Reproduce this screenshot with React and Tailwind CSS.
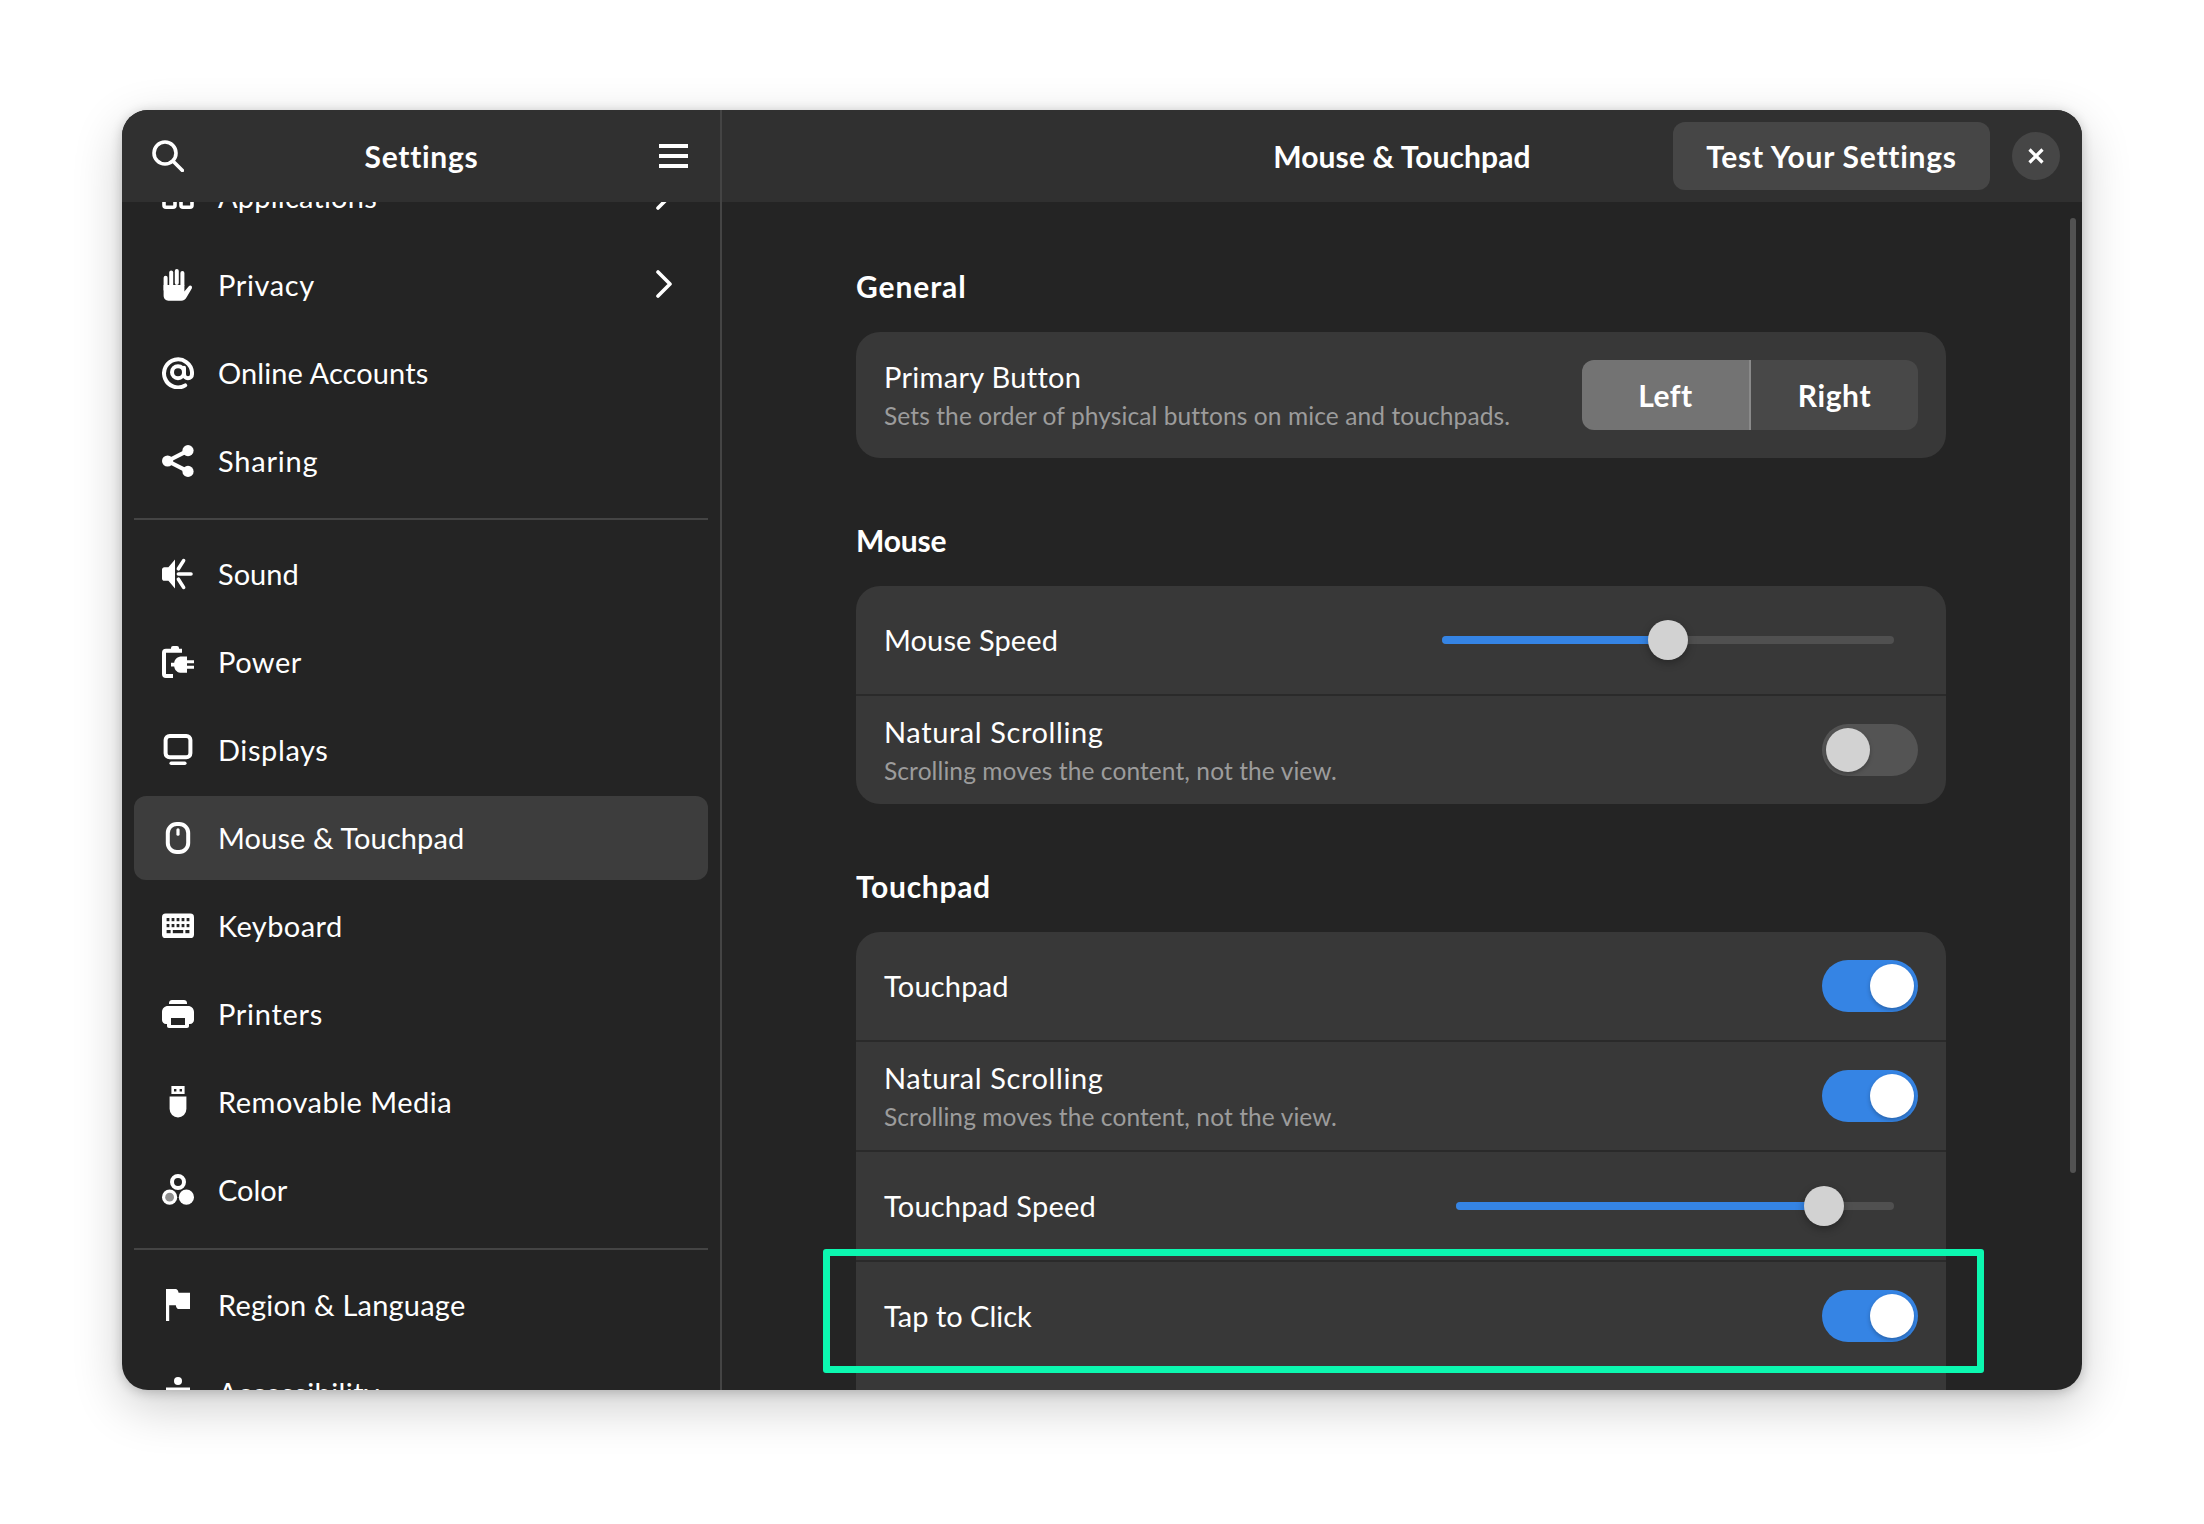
const BG = "#242424";

/* Symbolic icons, all on a 16 unit grid */
function Svg({ children, className = "" }) {
  return (
    <svg viewBox="0 0 16 16" className={`w-8 h-8 shrink-0 ${className}`} fill="#fff">
      {children}
    </svg>
  );
}

const line = { fill: "none", stroke: "#fff", strokeWidth: 2, strokeLinecap: "round" };

const icons = {
  apps: (
    <Svg>
      <g {...line} strokeWidth="1.8">
        <rect x="1" y="1" width="5.5" height="5.5" rx="1" />
        <rect x="9.5" y="1" width="5.5" height="5.5" rx="1" />
        <rect x="1" y="8.5" width="5.5" height="4.6" rx="1" />
        <rect x="9.5" y="8.5" width="5.5" height="4.6" rx="1" />
      </g>
    </Svg>
  ),
  privacy: (
    <Svg>
      <rect x="0.8" y="3.4" width="2" height="8" rx="1" />
      <rect x="3.6" y="0.8" width="2" height="8" rx="1" />
      <rect x="6.4" y="0" width="2" height="8" rx="1" />
      <rect x="9.2" y="1" width="2" height="8" rx="1" />
      <path d="M.8 8h10.4v3.2l2.200-2.600c.8-.8 2 .1 1.500 1.100l-2.600 4.400c-.6 1-1.400 1.800-2.700 1.800H3.200C1.800 15.900.8 14.800.8 13.300z" />
    </Svg>
  ),
  accounts: (
    <Svg>
      <g {...line}>
        <circle cx="8" cy="7.600" r="3" />
        <path d="M11.600 14.200A7 7 0 1 1 15 7.600v1a2 2 0 0 1-4 0V5.400" />
      </g>
    </Svg>
  ),
  sharing: (
    <Svg>
      <circle cx="13" cy="2.800" r="2.800" />
      <circle cx="2.800" cy="8" r="2.800" />
      <circle cx="13" cy="13.200" r="2.800" />
      <path d="M13 2.800 2.800 8 13 13.200" {...line} />
    </Svg>
  ),
  sound: (
    <Svg>
      <path d="M6.500.8v14.400L3.200 11.400H1.200C.5 11.400 0 10.900 0 10.200V5.800c0-.7.5-1.200 1.200-1.200h2z" />
      <path d="M8.200 5.400 10.800 1.300M8.200 8H14.500M8.200 10.600l2.600 4.100" {...line} strokeWidth="1.800" />
    </Svg>
  ),
  power: (
    <Svg>
      <rect x="4.500" y="0" width="4" height="3" rx="1" />
      <path d="M10 2.400H2a1 1 0 0 0-1 1V14a1 1 0 0 0 1 1h3.500" {...line} strokeLinecap="butt" />
      <path d="M12.500 5.200H10c-2.300 0-3.700 1.300-3.900 3.200H4.500v1.800h1.600c.2 1.900 1.600 3.200 3.900 3.200h2.500v-2h3.500V9.900h-3.500V8.600h3.500V7.100h-3.500z" />
    </Svg>
  ),
  displays: (
    <Svg>
      <rect x="1.800" y="1" width="12.400" height="10.600" rx="2" {...line} />
      <rect x="3.700" y="13.700" width="8.600" height="1.800" rx="0.9" />
    </Svg>
  ),
  mouse: (
    <Svg>
      <rect x="2.900" y="1" width="10.200" height="14" rx="4.500" {...line} />
      <path d="M8 3.900v2.200" {...line} strokeWidth="1.600" />
    </Svg>
  ),
  keyboard: (
    <Svg>
      <rect x="0" y="1.800" width="16" height="12.200" rx="1.800" />
      <g fill={BG}>
        {[3, 5.500, 8, 10.500, 13].map((x) => (
          <rect key={x} x={x - 0.7} y="4" width="1.400" height="1.600" />
        ))}
        {[3, 5.500, 8, 10.500, 13].map((x) => (
          <rect key={x} x={x - 0.7} y="7" width="1.400" height="1.600" />
        ))}
        <rect x="2.300" y="10" width="2" height="1.600" />
        <rect x="5.400" y="10" width="5.200" height="1.600" />
        <rect x="11.700" y="10" width="2" height="1.600" />
      </g>
    </Svg>
  ),
  printers: (
    <Svg>
      <path d="M3.500 3V2.500c0-.9.7-1.500 1.500-1.500h6c.8 0 1.500.6 1.500 1.500V3z" />
      <path d="M3 4h10c1.700 0 3 1.300 3 3v4c0 1.100-.9 2-2 2h-.5v1c0 .6-.4 1-1 1h-9c-.6 0-1-.4-1-1v-1H2c-1.100 0-2-.9-2-2V7c0-1.700 1.300-3 3-3z" />
      <rect x="4.500" y="10" width="7" height="3.500" fill={BG} />
    </Svg>
  ),
  media: (
    <Svg>
      <path
        fillRule="evenodd"
        d="M4.700 0h6.600v4H4.700zM6 1.500v1.200h1.200V1.500zm2.800 0v1.200H10V1.500z"
      />
      <path d="M3.800 5.200h8.400v6.300a4.200 4.200 0 0 1-8.400 0z" />
    </Svg>
  ),
  color: (
    <Svg>
      <circle cx="3.800" cy="11.600" r="3.800" />
      <circle cx="3.800" cy="11.600" r="2.200" fill="#8f8f8f" />
      <circle cx="12.200" cy="11.600" r="3.800" />
      <circle cx="8" cy="4" r="3" fill="none" stroke="#fff" strokeWidth="2" />
    </Svg>
  ),
  region: (
    <Svg>
      <path d="M2 0h4.800c.8 0 1.200.6 1.500 1.900H14v8.100H8.200c-.7 0-1-.6-1.300-1.900H3.600V16H2z" />
    </Svg>
  ),
  accessibility: (
    <Svg>
      <circle cx="8" cy="2" r="2" />
      <path d="M2 5.300h12v1.800h-4v8H6v-8H2z" />
    </Svg>
  ),
};

const group1 = [
  { id: "apps", label: "Applications", arrow: true, track: "tracking-[0.2px]" },
  { id: "privacy", label: "Privacy", arrow: true, track: "tracking-[0.6px]" },
  { id: "accounts", label: "Online Accounts", track: "tracking-[0.1px]" },
  { id: "sharing", label: "Sharing", track: "tracking-[0.8px]" },
];

const group2 = [
  { id: "sound", label: "Sound", track: "tracking-[0px]" },
  { id: "power", label: "Power", track: "tracking-[0.5px]" },
  { id: "displays", label: "Displays", track: "tracking-[0.6px]" },
  { id: "mouse", label: "Mouse & Touchpad", active: true, track: "tracking-[0.1px]" },
  { id: "keyboard", label: "Keyboard", track: "tracking-[0.4px]" },
  { id: "printers", label: "Printers", track: "tracking-[0.7px]" },
  { id: "media", label: "Removable Media", track: "tracking-[0.5px]" },
  { id: "color", label: "Color", track: "tracking-[0px]" },
];

const group3 = [
  { id: "region", label: "Region & Language", track: "tracking-[0.2px]" },
  { id: "accessibility", label: "Accessibility", track: "tracking-[0.4px]" },
];

function NavRow({ item }) {
  return (
    <div
      className={`h-[84px] shrink-0 flex items-center pl-[28px] pr-[36px] rounded-[12px] ${
        item.active ? "bg-[#3d3d3d]" : ""
      }`}
    >
      {icons[item.id]}
      <span className={`ml-[24px] flex-1 pb-px text-[29px] text-white ${item.track}`}>{item.label}</span>
      {item.arrow && (
        <svg viewBox="0 0 16 28" className="w-4 h-7 -mt-[2px]" fill="none" stroke="#fff" strokeWidth="3.600" strokeLinecap="round" strokeLinejoin="round">
          <path d="M2 2l12 12L2 26" />
        </svg>
      )}
    </div>
  );
}

function NavGroup({ items }) {
  return (
    <div className="flex flex-col gap-1">
      {items.map((item) => (
        <NavRow key={item.id} item={item} />
      ))}
    </div>
  );
}

function Toggle({ on }) {
  return (
    <div
      className={`w-[96px] h-[52px] rounded-full flex items-center px-1 ${
        on ? "bg-[#3584e4] justify-end" : "bg-[#545454] justify-start"
      }`}
    >
      <div
        className={`w-[44px] h-[44px] rounded-full shadow-[0_2px_4px_rgba(0,0,0,0.25)] ${
          on ? "bg-white" : "bg-[#d2d2d2]"
        }`}
      />
    </div>
  );
}

function Slider({ widthClass, fillClass, thumbClass }) {
  return (
    <div className={`relative h-2 rounded-full bg-[#505050] mr-[24px] ${widthClass}`}>
      <div className={`absolute left-0 top-0 h-2 rounded-full bg-[#3584e4] ${fillClass}`} />
      <div
        className={`absolute top-[-16px] w-[40px] h-[40px] rounded-full bg-[#d2d2d2] shadow-[0_3px_8px_rgba(0,0,0,0.3)] ${thumbClass}`}
      />
    </div>
  );
}

function RowText({ title, sub, track = "tracking-[0.1px]" }) {
  return (
    <div className={`flex flex-col ${sub ? "pt-[2px]" : ""}`}>
      <span className={`text-[29px] leading-[38px] text-white ${track}`}>{title}</span>
      {sub && <span className="mt-[2px] text-[24.5px] leading-[36px] tracking-[0.1px] text-[#9c9c9c]">{sub}</span>}
    </div>
  );
}

function Row({ title, sub, track, children, last }) {
  return (
    <div
      className={`flex items-center justify-between pl-[28px] pr-[28px] h-[108px] ${
        last ? "" : "border-b-2 border-[#2a2a2a] box-content"
      }`}
    >
      <RowText title={title} sub={sub} track={track} />
      {children}
    </div>
  );
}

function SectionTitle({ children, className = "" }) {
  return <h2 className={`text-[30px] leading-[40px] font-bold text-white ${className}`}>{children}</h2>;
}

export default function App() {
  return (
    <div className="w-[2204px] h-[1524px] bg-white flex justify-center items-start pt-[110px] font-['Lato',sans-serif] overflow-hidden">
      <div className="relative w-[1960px] h-[1280px] rounded-[26px] overflow-hidden bg-[#242424] flex shadow-[0_2px_12px_rgba(0,0,0,0.2),0_16px_50px_rgba(0,0,0,0.2)]">
        {/* Sidebar */}
        <aside className="w-[600px] shrink-0 flex flex-col border-r-2 border-[#444444]">
          <header className="h-[92px] shrink-0 relative z-10 bg-[#303030] flex items-center justify-between pl-[30px] pr-[32px]">
            <svg viewBox="0 0 16 16" className="w-8 h-8" fill="none" stroke="#fff" strokeWidth="1.800" strokeLinecap="round">
              <circle cx="6.500" cy="6.500" r="5.500" />
              <path d="M10.700 10.700 15.200 15.200" />
            </svg>
            <span className="text-[30px] font-bold tracking-[0.7px] text-white">Settings</span>
            <div className="w-[29px] flex flex-col gap-[6px]">
              <div className="h-1 bg-white" />
              <div className="h-1 bg-white" />
              <div className="h-1 bg-white" />
            </div>
          </header>
          <div className="flex-1 overflow-hidden px-3">
            <div className="-mt-[47px]">
              <NavGroup items={group1} />
              <div className="h-[2px] bg-[#444444] mt-[15px] mb-3" />
              <NavGroup items={group2} />
              <div className="h-[2px] bg-[#444444] mt-4 mb-[13px]" />
              <NavGroup items={group3} />
            </div>
          </div>
        </aside>

        {/* Content */}
        <main className="flex-1 flex flex-col min-w-0">
          <header className="h-[92px] shrink-0 relative bg-[#303030] flex items-center justify-center">
            <span className="text-[30px] font-bold tracking-[0.1px] text-white">Mouse &amp; Touchpad</span>
            <div className="absolute right-[92px] top-[12px] w-[317px] h-[68px] rounded-[12px] bg-[#464646] flex items-center justify-center text-[30px] font-bold tracking-[0.75px] text-white">
              Test Your Settings
            </div>
            <div className="absolute right-[22px] top-[22px] w-[48px] h-[48px] rounded-full bg-[#464646] flex items-center justify-center">
              <svg viewBox="0 0 16 16" className="w-4 h-4" fill="none" stroke="#fff" strokeWidth="3.200">
                <path d="M1.500 1.500l13 13M14.500 1.500l-13 13" />
              </svg>
            </div>
          </header>
          <div className="flex-1 overflow-hidden pl-[134px] pt-[64px]">
            <div className="w-[1090px]">
              <SectionTitle className="tracking-[0.9px]">General</SectionTitle>
              <div className="mt-[26px] rounded-[24px] bg-[#383838]">
                <div className="flex items-center justify-between pl-[28px] pr-[28px] h-[126px]">
                  <RowText
                    title="Primary Button"
                    sub="Sets the order of physical buttons on mice and touchpads."
                    track="tracking-[0.3px]"
                  />
                  <div className="flex w-[336px] h-[70px] rounded-[12px] overflow-hidden text-[30px] font-bold text-white">
                    <div className="flex-1 bg-[#737373] border-r-2 border-[#8a8a8a] flex items-center justify-center tracking-[0.5px]">Left</div>
                    <div className="flex-1 bg-[#484848] flex items-center justify-center tracking-[0.6px]">Right</div>
                  </div>
                </div>
              </div>

              <SectionTitle className="mt-[62px] tracking-[-0.2px]">Mouse</SectionTitle>
              <div className="mt-[26px] rounded-[24px] bg-[#383838]">
                <Row title="Mouse Speed">
                  <Slider widthClass="w-[452px]" fillClass="w-[226px]" thumbClass="left-[206px]" />
                </Row>
                <Row title="Natural Scrolling" sub="Scrolling moves the content, not the view." track="tracking-[0.6px]" last>
                  <Toggle />
                </Row>
              </div>

              <SectionTitle className="mt-[62px] tracking-[0.7px]">Touchpad</SectionTitle>
              <div className="mt-[26px] rounded-t-[24px] bg-[#383838]">
                <Row title="Touchpad" track="tracking-[0.2px]">
                  <Toggle on />
                </Row>
                <Row title="Natural Scrolling" sub="Scrolling moves the content, not the view." track="tracking-[0.6px]">
                  <Toggle on />
                </Row>
                <Row title="Touchpad Speed" track="tracking-[0.2px]">
                  <Slider widthClass="w-[438px]" fillClass="w-[368px]" thumbClass="left-[348px]" />
                </Row>
                <Row title="Tap to Click" track="tracking-[0px]">
                  <Toggle on />
                </Row>
                <div className="h-[40px]" />
              </div>
            </div>
          </div>
        </main>

        {/* Scrollbar and the highlight drawn over the picture */}
        <div className="absolute left-[1948px] top-[108px] w-[6px] h-[955px] rounded-full bg-[#525252]" />
        <div className="absolute left-[701px] top-[1139px] w-[1161px] h-[124px] border-[7px] border-[#0cf8b0] rounded-[3px]" />
      </div>
    </div>
  );
}
